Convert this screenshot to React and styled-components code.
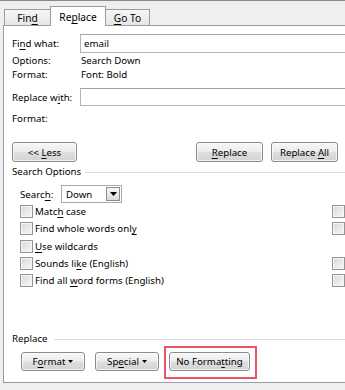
import React from "react";
import styled, { createGlobalStyle } from "styled-components";

const Global = createGlobalStyle`
  html, body { margin: 0; padding: 0; background: #f0f0f0; }
  body {
    width: 345px; height: 390px; overflow: hidden;
    font-family: "Noto Sans", "Segoe UI", sans-serif;
    font-size: 9.7px; color: #000;
  }
  u { text-decoration-thickness: 1px; text-underline-offset: 1.5px; }
`;

const Dialog = styled.div`
  box-sizing: border-box;
  width: 345px;
  height: 390px;
  overflow: hidden;
  border-top: 1px solid #8a8a8a;
  background: #efefef;
  display: flex;
  flex-direction: column;
`;

const TabStrip = styled.div`
  flex: none;
  height: 24px;
  display: flex;
  align-items: flex-end;
  padding-left: 4px;
`;

const Tab = styled.div`
  box-sizing: border-box;
  position: relative;
  z-index: ${(p) => (p.$active ? 2 : 1)};
  width: ${(p) => p.$w}px;
  height: ${(p) => (p.$active ? 20 : 16)}px;
  margin-left: ${(p) => (p.$first ? 0 : -1)}px;
  margin-bottom: ${(p) => (p.$active ? -1 : 0)}px;
  padding-top: ${(p) => (p.$active ? 1 : 0)}px;
  border: 1px solid #9a9ca3;
  border-bottom: none;
  background: ${(p) =>
    p.$active ? "#ffffff" : "linear-gradient(#f6f6f6, #e6e6e6)"};
  display: flex;
  align-items: center;
  justify-content: center;
  font-size: 10.2px;
`;

const Panel = styled.div`
  flex: none;
  box-sizing: border-box;
  margin-left: 3px;
  width: 350px;
  height: 358px;
  background: #fff;
  border: 1px solid #9a9ca3;
  padding: 8px 0 11px 8px;
  display: flex;
  flex-direction: column;
`;

const FieldRow = styled.div`
  display: grid;
  grid-template-columns: 68px 1fr;
  align-items: center;
  margin-top: ${(p) => p.$mt || 0}px;
`;

const TextBox = styled.div`
  box-sizing: border-box;
  height: ${(p) => p.$h}px;
  border: 1px solid #b4b4b4;
  border-top-color: #a3a3a3;
  padding-left: 3px;
  display: flex;
  align-items: center;
  background: #fff;
`;

const InfoRow = styled.div`
  display: grid;
  grid-template-columns: 69px 1fr;
  line-height: 14px;
  margin-top: ${(p) => p.$mt || 0}px;
`;

const ButtonRow = styled.div`
  display: flex;
  justify-content: space-between;
  margin-top: ${(p) => p.$mt || 0}px;
  margin-right: 14px;
`;

const ButtonGroup = styled.div`
  display: flex;
  gap: ${(p) => p.$gap}px;
  margin-left: ${(p) => p.$ml || 0}px;
  margin-top: ${(p) => p.$mt || 0}px;
`;

const Button = styled.div`
  position: relative;
  box-sizing: border-box;
  width: ${(p) => p.$w}px;
  height: ${(p) => p.$h || 20}px;
  border: 1px solid #8b8b8b;
  border-radius: 3px;
  background: linear-gradient(#f7f7f7 0%, #ececec 48%, #dedede 52%, #d3d3d3 100%);
  box-shadow: inset 0 0 0 1px rgba(255, 255, 255, 0.75);
  display: flex;
  align-items: center;
  justify-content: center;
  gap: 3px;
  white-space: nowrap;
`;

const Highlight = styled.div`
  position: relative;
  &::after {
    content: "";
    position: absolute;
    top: -6px;
    left: -5px;
    right: -7px;
    bottom: -8px;
    border: 2px solid #e8575f;
    pointer-events: none;
  }
`;

const GroupHeader = styled.div`
  display: flex;
  align-items: center;
  gap: ${(p) => p.$gap}px;
  line-height: 14px;
  margin-top: ${(p) => p.$mt || 0}px;
`;

const GroupLine = styled.div`
  flex: 1;
  height: 1px;
  background: #dcdcdc;
`;

const SearchRow = styled.div`
  display: flex;
  align-items: center;
  margin: 6px 0 0 8px;
`;

const SearchLabel = styled.div`
  width: 41px;
`;

const Select = styled.div`
  box-sizing: border-box;
  width: 61px;
  height: 18px;
  border: 1px solid #a9a9a9;
  display: flex;
  align-items: center;
  padding: 1px;
  background: #fff;
`;

const SelectText = styled.div`
  flex: 1;
  padding-left: 3px;
`;

const SelectArrow = styled.div`
  box-sizing: border-box;
  width: 14px;
  height: 14px;
  border: 1px solid #8e8e8e;
  background: linear-gradient(#f6f6f6, #dcdcdc);
  display: flex;
  align-items: center;
  justify-content: center;
`;

const CheckList = styled.div`
  display: flex;
  flex-direction: column;
  margin: 0 7px 0 8px;
`;

const CheckRow = styled.div`
  display: flex;
  align-items: center;
  height: 17.3px;
`;

const Box = styled.div`
  box-sizing: border-box;
  width: 13px;
  height: 13px;
  flex: none;
  border: 1px solid #959595;
  background: linear-gradient(135deg, #d9d9d9 0%, #f8f8f8 100%);
  box-shadow: inset 0 0 0 1px #f6f6f6;
`;

const CheckLabel = styled.div`
  flex: 1;
  margin-left: 2px;
`;

const Spacer = styled.div`
  flex: 1;
`;

const Caret = () => (
  <svg width="5" height="3" viewBox="0 0 5 3">
    <path d="M0 0h5L2.5 3z" fill="#000" />
  </svg>
);

const options = [
  { label: <>Matc<u>h</u> case</>, right: true },
  { label: <>Find whole words onl<u>y</u></>, right: true },
  { label: <><u>U</u>se wildcards</>, right: false },
  { label: <>Sounds li<u>k</u>e (English)</>, right: true },
  { label: <>Find all <u>w</u>ord forms (English)</>, right: true },
];

export default function App() {
  return (
    <>
      <Global />
      <Dialog>
        <TabStrip>
          <Tab $w={47} $first>
            <span>Fin<u>d</u></span>
          </Tab>
          <Tab $w={56} $active>
            <span>Re<u>p</u>lace</span>
          </Tab>
          <Tab $w={45}>
            <span><u>G</u>o To</span>
          </Tab>
        </TabStrip>
        <Panel>
          <FieldRow>
            <div>Fi<u>n</u>d what:</div>
            <TextBox $h={19}>email</TextBox>
          </FieldRow>
          <InfoRow $mt={1}>
            <div>Options:</div>
            <div>Search Down</div>
          </InfoRow>
          <InfoRow>
            <div>Format:</div>
            <div>Font: Bold</div>
          </InfoRow>
          <FieldRow $mt={6}>
            <div>Replace w<u>i</u>th:</div>
            <TextBox $h={18} />
          </FieldRow>
          <InfoRow $mt={6}>
            <div>Format:</div>
            <div />
          </InfoRow>
          <ButtonRow $mt={16}>
            <Button $w={65}>
              <span>&lt;&lt; <u>L</u>ess</span>
            </Button>
            <ButtonGroup $gap={8}>
              <Button $w={67}>
                <span><u>R</u>eplace</span>
              </Button>
              <Button $w={67}>
                <span>Replace <u>A</u>ll</span>
              </Button>
            </ButtonGroup>
          </ButtonRow>
          <GroupHeader $mt={3} $gap={4}>
            <span>Search Options</span>
            <GroupLine />
          </GroupHeader>
          <SearchRow>
            <SearchLabel>
              Searc<u>h</u>:
            </SearchLabel>
            <Select>
              <SelectText>Down</SelectText>
              <SelectArrow>
                <svg width="7" height="4" viewBox="0 0 7 4">
                  <path d="M0 0h7L3.5 4z" fill="#000" />
                </svg>
              </SelectArrow>
            </Select>
          </SearchRow>
          <CheckList>
            {options.map((o, i) => (
              <CheckRow key={i}>
                <Box />
                <CheckLabel>{o.label}</CheckLabel>
                {o.right && <Box />}
              </CheckRow>
            ))}
          </CheckList>
          <Spacer />
          <GroupHeader $gap={6}>
            <span>Replace</span>
            <GroupLine />
          </GroupHeader>
          <ButtonGroup $gap={10} $ml={9} $mt={6}>
            <Button $w={64} $h={19}>
              <span>F<u>o</u>rmat</span>
              <Caret />
            </Button>
            <Button $w={64} $h={19}>
              <span>Sp<u>e</u>cial</span>
              <Caret />
            </Button>
            <Highlight>
              <Button $w={81} $h={19}>
                <span>No Forma<u>t</u>ting</span>
              </Button>
            </Highlight>
          </ButtonGroup>
        </Panel>
      </Dialog>
    </>
  );
}
